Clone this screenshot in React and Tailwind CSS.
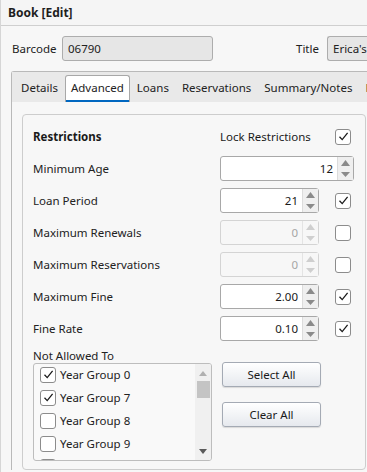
import React from 'react';

// Restriction rows on the Advanced tab
const ROWS = [
    { label: 'Minimum Age', value: '12', wide: true },
    { label: 'Loan Period', value: '21', checked: true },
    { label: 'Maximum Renewals', value: '0', disabled: true, checked: false },
    { label: 'Maximum Reservations', value: '0', disabled: true, checked: false },
    { label: 'Maximum Fine', value: '2.00', checked: true },
    { label: 'Fine Rate', value: '0.10', checked: true },
];

const GROUPS = [
    { name: 'Year Group 0', checked: true },
    { name: 'Year Group 7', checked: true },
    { name: 'Year Group 8', checked: false },
    { name: 'Year Group 9', checked: false },
    { name: 'Year Group 10', checked: false },
];

const TABS = ['Details', 'Advanced', 'Loans', 'Reservations', 'Summary/Notes', 'Publishing'];

const CheckBox = ({ checked }) => (
    <div className="w-[16px] h-[16px] shrink-0 rounded-[3px] border border-[#8c8c8c] bg-white flex items-center justify-center">
        {checked && (
            <svg width="11" height="11" viewBox="0 0 11 11">
                <path d="M1.5 5.8 L4.2 8.6 L9.6 1.8" fill="none" stroke="#1a1a1a" strokeWidth="1.3" />
            </svg>
        )}
    </div>
);

const SpinBox = ({ value, wide, disabled }) => (
    <div
        className={`h-[25px] flex rounded-[3px] border ${wide ? 'w-[134px]' : 'w-[99px]'} ${
            disabled ? 'border-[#d4d4d4] bg-[#f7f7f7]' : 'border-[#a8a8a8] bg-white'
        }`}
    >
        <div className={`flex-1 flex items-center justify-end pr-[4px] ${disabled ? 'text-[#a6a6a6]' : 'text-[#1a1a1a]'}`}>
            {value}
        </div>
        <div className={`w-[16px] flex flex-col border-l ${disabled ? 'border-[#e4e4e4] bg-[#f7f7f7]' : 'border-[#dcdcdc] bg-[#efefef]'}`}>
            <div className="flex-1 flex items-center justify-center">
                <svg width="9" height="6" viewBox="0 0 9 6">
                    <path d="M0 6 L4.5 0 L9 6 Z" fill={disabled ? '#cfcfcf' : '#8a8a8a'} />
                </svg>
            </div>
            <div className="flex-1 flex items-center justify-center">
                <svg width="9" height="5" viewBox="0 0 9 5">
                    <path d="M0 0 L9 0 L4.5 5 Z" fill={disabled ? '#cfcfcf' : '#8a8a8a'} />
                </svg>
            </div>
        </div>
    </div>
);

const PushButton = ({ children }) => (
    <button className="w-[99px] h-[25px] rounded-[3px] border border-[#a4aab4] bg-gradient-to-b from-white to-[#e6e9ee] shadow-[0_1px_1px_rgba(0,0,0,0.12)] text-[#1a1a1a]">
        {children}
    </button>
);

const App = () => {
    return (
        <div
            className="w-[367px] h-[472px] overflow-hidden bg-[#f7f7f7] text-[11.5px] text-[#222] border-l border-[#d6d6d6]"
            style={{ fontFamily: '"Noto Sans", "Open Sans", sans-serif' }}
        >
            {/* Window header */}
            <div className="h-[26px] border-b border-[#cfcfcf] bg-[#f5f5f5] pl-[7px] flex items-center font-bold text-[12px] text-[#1e1e1e]">
                <span>Book [Edit]</span>
            </div>

            {/* Barcode / Title row */}
            <div className="flex items-center pt-[10px] pl-[11px] whitespace-nowrap">
                <span className="w-[50px] shrink-0">Barcode</span>
                <div className="w-[151px] h-[25px] shrink-0 rounded-[3px] border border-[#adadad] bg-[#e6e6e6] flex items-center pl-[5px]">
                    06790
                </div>
                <span className="ml-[83px] w-[31px] shrink-0">Title</span>
                <div className="w-[80px] h-[25px] shrink-0 rounded-l-[3px] border border-r-0 border-[#adadad] bg-[#e6e6e6] flex items-center pl-[5px]">
                    Erica's Secret
                </div>
            </div>

            {/* Tab control */}
            <div className="mt-[10px] ml-[10px] border-l border-t border-[#b9b9b9] rounded-tl-[3px]">
                <div className="h-[30px] bg-[#e9e9e9] flex items-end pl-[3px] gap-[1px] whitespace-nowrap">
                    {TABS.map((t) =>
                        t === 'Advanced' ? (
                            <div
                                key={t}
                                className="h-[27px] shrink-0 px-[5px] bg-white border border-b-0 border-[#a8a8a8] rounded-t-[3px] flex flex-col"
                            >
                                <div className="flex-1 flex items-center">{t}</div>
                                <div className="h-[2px] bg-[#0067c0] -mx-[5px]" />
                            </div>
                        ) : (
                            <div key={t} className="h-[27px] shrink-0 px-[6px] flex items-center pb-[2px]">
                                {t}
                            </div>
                        )
                    )}
                </div>

                {/* Tab body */}
                <div className="pt-[12px] pl-[10px] pr-[1px]">
                    <div className="rounded-[4px] border border-[#cdcdcd] bg-[#f7f7f7] pl-[10px] pt-[9px] pb-[8px]">
                        {/* Header row */}
                        <div className="h-[25px] flex items-center">
                            <span className="w-[187px] font-bold text-[#1a1a1a]">Restrictions</span>
                            <span className="w-[115px] text-[#1a1a1a]">Lock Restrictions</span>
                            <CheckBox checked />
                        </div>

                        <div className="mt-[7px] flex flex-col gap-[7px]">
                            {ROWS.map((r) => (
                                <div key={r.label} className="h-[25px] flex items-center">
                                    <span className="w-[187px]">{r.label}</span>
                                    <div className="w-[115px]">
                                        <SpinBox value={r.value} wide={r.wide} disabled={r.disabled} />
                                    </div>
                                    {!r.wide && <CheckBox checked={r.checked} />}
                                </div>
                            ))}
                        </div>

                        <div className="mt-[6px] h-[16px] leading-[18px]">Not Allowed To</div>

                        <div className="flex items-start">
                            {/* Year group list */}
                            <div className="w-[179px] h-[98px] shrink-0 rounded-[3px] border border-[#bdbdbd] bg-[#f9f9f9] flex overflow-hidden">
                                <div className="flex-1 pl-[6px] -mt-[1px]">
                                    {GROUPS.map((g) => (
                                        <div key={g.name} className="h-[23px] flex items-center gap-[4px]">
                                            <CheckBox checked={g.checked} />
                                            <span>{g.name}</span>
                                        </div>
                                    ))}
                                </div>
                                <div className="w-[16px] bg-[#f0f0f0] flex flex-col items-center">
                                    <svg className="mt-[7px]" width="8" height="5" viewBox="0 0 8 5">
                                        <path d="M0 5 L4 0 L8 5 Z" fill="#b0b0b0" />
                                    </svg>
                                    <div className="mt-[5px] w-[13px] h-[17px] bg-[#c4c4c4]" />
                                    <svg className="mt-[51px]" width="8" height="5" viewBox="0 0 8 5">
                                        <path d="M0 0 L8 0 L4 5 Z" fill="#5a5a5a" />
                                    </svg>
                                </div>
                            </div>

                            <div className="ml-[10px] -mt-[1px] flex flex-col gap-[15px]">
                                <PushButton>Select All</PushButton>
                                <PushButton>Clear All</PushButton>
                            </div>
                        </div>
                    </div>
                </div>
            </div>
        </div>
    );
};

export default App;
